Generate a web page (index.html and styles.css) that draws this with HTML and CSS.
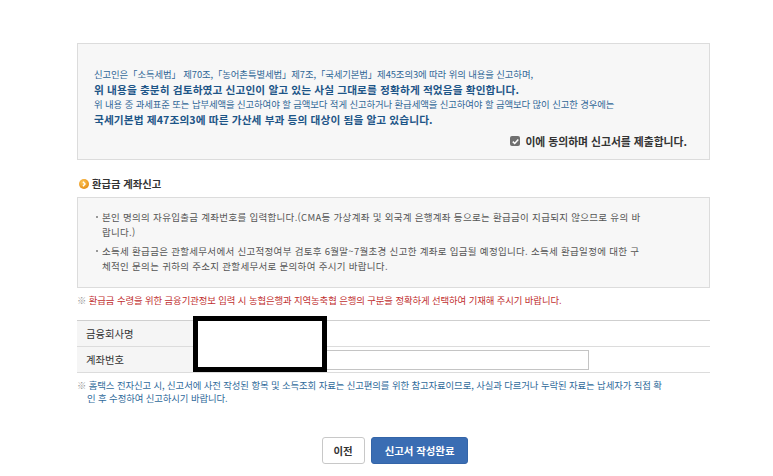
FILE: index.html
```html
<!DOCTYPE html>
<html lang="ko">
<head>
<meta charset="utf-8">
<title>환급금 계좌신고</title>
<link rel="stylesheet" href="styles.css">
</head>
<body>
<div class="wrap">

    <div class="agreeBox">
        <p class="small">신고인은「소득세법」 제70조,「농어촌특별세법」제7조,「국세기본법」제45조의3에 따라 위의 내용을 신고하며,</p>
        <p class="strong">위 내용을 충분히 검토하였고 신고인이 알고 있는 사실 그대로를 정확하게 적었음을 확인합니다.</p>
        <p class="small">위 내용 중 과세표준 또는 납부세액을 신고하여야 할 금액보다 적게 신고하거나 환급세액을 신고하여야 할 금액보다 많이 신고한 경우에는</p>
        <p class="strong">국세기본법 제47조의3에 따른 가산세 부과 등의 대상이 됨을 알고 있습니다.</p>
        <label class="agree">
            <span class="chk"><svg width="9" height="9" viewBox="0 0 9 9"><path d="M1.8 4.6 L3.7 6.5 L7.3 2.4" fill="none" stroke="#fff" stroke-width="1.5"/></svg></span>
            이에 동의하며 신고서를 제출합니다.
        </label>
    </div>

    <h3 class="secTitle">
        <span class="dot"><svg width="10" height="10" viewBox="0 0 10 10"><defs><radialGradient id="og" cx="0.4" cy="0.35" r="0.7"><stop offset="0" stop-color="#ffc95a"/><stop offset="1" stop-color="#e38a12"/></radialGradient></defs><circle cx="5" cy="5" r="5" fill="url(#og)"/><path d="M4 2.8 L6 5 L4 7.2" fill="none" stroke="#fff" stroke-width="1.4"/></svg></span>
        환급금 계좌신고
    </h3>

    <div class="infoBox">
        <ul>
            <li>본인 명의의 자유입출금 계좌번호를 입력합니다.(CMA등 가상계좌 및 외국계 은행계좌 등으로는 환급금이 지급되지 않으므로 유의 바<br>랍니다.)</li>
            <li>소득세 환급금은 관할세무서에서 신고적정여부 검토후 6월말~7월초경 신고한 계좌로 입금될 예정입니다. 소득세 환급일정에 대한 구<br>체적인 문의는 귀하의 주소지 관할세무서로 문의하여 주시기 바랍니다.</li>
        </ul>
    </div>

    <p class="note red"><span class="mark">※</span> 환급금 수령을 위한 금융기관정보 입력 시 농협은행과 지역농축협 은행의 구분을 정확하게 선택하여 기재해 주시기 바랍니다.</p>

    <div class="tableWrap">
        <table class="acct">
            <tr>
                <th>금융회사명</th>
                <td></td>
            </tr>
            <tr>
                <th>계좌번호</th>
                <td><input type="text" class="txt"></td>
            </tr>
        </table>
        <div class="redact"></div>
    </div>

    <p class="note blue"><span class="mark">※</span> 홈택스 전자신고 시, 신고서에 사전 작성된 항목 및 소득조회 자료는 신고편의를 위한 참고자료이므로, 사실과 다르거나 누락된 자료는 납세자가 직접 확<br><span class="indent">인 후 수정하여 신고하시기 바랍니다.</span></p>

    <div class="btns">
        <button class="btn">이전</button>
        <button class="btn primary">신고서 작성완료</button>
    </div>

</div>
</body>
</html>
```

FILE: styles.css
```css
body {
    margin: 0;
    background: #fff;
    font-family: "Noto Sans CJK KR", "Noto Sans", sans-serif;
    color: #444;
}

.wrap {
    width: 633px;
    margin-left: 77px;
    padding-top: 43px;
}

p { margin: 0; }

.agreeBox {
    height: 117px;
    box-sizing: border-box;
    padding: 23px 20px 0 16px;
    background: #f7f7f7;
    border: 1px solid #dcdcdc;
    color: #2f6696;
}

.agreeBox .small {
    font-size: 9.4px;
    line-height: 15px;
    letter-spacing: -0.1px;
    white-space: nowrap;
}

.agreeBox .strong {
    font-size: 10.7px;
    line-height: 15px;
    font-weight: bold;
    color: #1d5587;
    letter-spacing: 0.1px;
    white-space: nowrap;
}

.agree {
    display: flex;
    justify-content: flex-end;
    align-items: center;
    gap: 5px;
    margin-top: 6px;
    padding-right: 2px;
    font-size: 10.8px;
    font-weight: bold;
    color: #333;
}

.chk {
    width: 10px;
    height: 10px;
    background: #707070;
    border-radius: 2px;
    display: flex;
    align-items: center;
    justify-content: center;
}

.secTitle {
    display: flex;
    align-items: center;
    gap: 3px;
    margin: 17px 0 6px 2px;
    font-size: 10.3px;
    font-weight: bold;
    color: #333;
    line-height: 14px;
}

.dot { display: flex; }

.infoBox {
    background: #f7f7f7;
    border: 1px solid #dcdcdc;
    padding: 12px 10px 13px 15px;
}

.infoBox ul {
    margin: 0;
    padding: 0;
    list-style: none;
}

.infoBox li {
    position: relative;
    padding-left: 9px;
    font-size: 9.5px;
    line-height: 15px;
    color: #555;
    letter-spacing: 0.3px;
    white-space: nowrap;
}

.infoBox li + li { margin-top: 4px; }

.infoBox li:before {
    content: "";
    position: absolute;
    left: 3px;
    top: 6px;
    width: 2px;
    height: 2px;
    background: #999;
}

.note {
    font-size: 9.4px;
    line-height: 13px;
    letter-spacing: -0.1px;
    white-space: nowrap;
}

.note .mark { color: #999; }

.note.red {
    margin-top: 6px;
    color: #bf2f2f;
}

.note.blue {
    margin-top: 6px;
    color: #2f6a9a;
}

.note .indent { padding-left: 10px; }

.tableWrap {
    position: relative;
    margin-top: 13px;
}

.acct {
    width: 100%;
    border-collapse: collapse;
    border-top: 1px solid #cfcfcf;
}

.acct th,
.acct td {
    height: 25px;
    border-bottom: 1px solid #dcdcdc;
    padding: 0;
}

.acct th {
    width: 118px;
    background: #f5f5f5;
    text-align: left;
    padding-left: 9px;
    font-size: 10.3px;
    font-weight: normal;
    color: #333;
    box-sizing: border-box;
}

.acct td { padding-left: 5px; }

.txt {
    display: block;
    width: 389px;
    height: 20px;
    box-sizing: border-box;
    border: 1px solid #c4c4c4;
    margin: 0;
}

/* redacted block laid over the table */
.redact {
    position: absolute;
    left: 116px;
    top: -4px;
    width: 134px;
    height: 56px;
    box-sizing: border-box;
    border: 5px solid #000;
    background: #fff;
}

.btns {
    display: flex;
    justify-content: center;
    gap: 6px;
    margin-top: 32px;
    padding-left: 3px;
}

.btn {
    height: 27px;
    padding: 0 11px;
    border: 1px solid #c8c8c8;
    border-radius: 3px;
    background: #fff;
    font-family: inherit;
    font-size: 10.4px;
    font-weight: bold;
    color: #333;
}

.btn.primary {
    background: #3a6db3;
    border-color: #3465a8;
    color: #fff;
    padding: 0 13px;
}
```
